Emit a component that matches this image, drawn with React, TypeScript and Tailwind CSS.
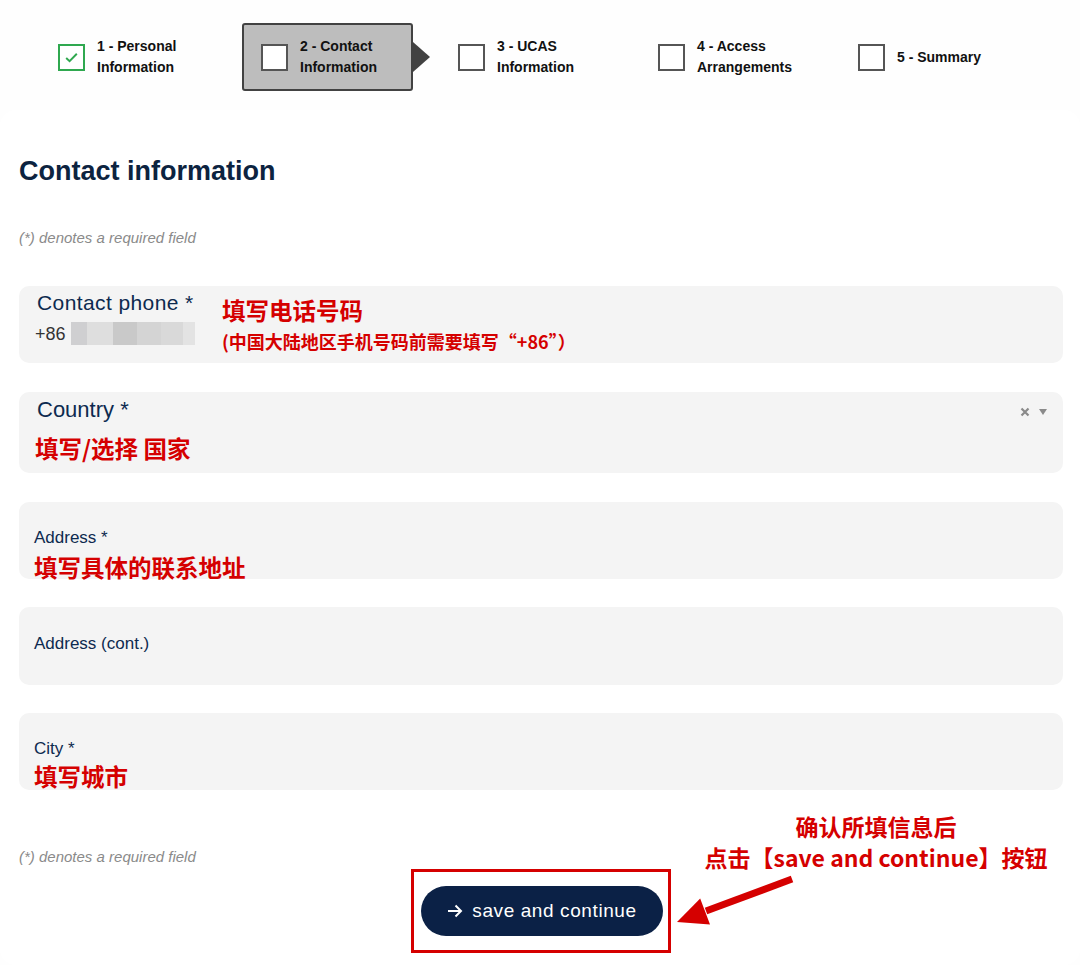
import * as React from "react";

const steps = [
  { n: "1 - Personal", l2: "Information", state: "done" },
  { n: "2 - Contact", l2: "Information", state: "active" },
  { n: "3 - UCAS", l2: "Information", state: "todo" },
  { n: "4 - Access", l2: "Arrangements", state: "todo" },
  { n: "5 - Summary", l2: "", state: "todo" },
];

const cjk = "font-['Noto_Sans_CJK_SC','Noto_Sans',sans-serif] font-bold text-[#d50000]";

function StepBox({ done }: { done?: boolean }) {
  return (
    <div
      className={
        "w-[27px] h-[27px] shrink-0 bg-white border-2 flex items-center justify-center " +
        (done ? "border-[#2fa84f]" : "border-[#555555]")
      }
    >
      {done && (
        <svg viewBox="0 0 16 16" className="w-[17px] h-[17px]">
          <path d="M3 8.5l3.2 3L13 4.5" fill="none" stroke="#2fa84f" strokeWidth="1.8" />
        </svg>
      )}
    </div>
  );
}

function StepLabel({ n, l2 }: { n: string; l2: string }) {
  return (
    <div className="ml-[12px] text-[14px] leading-[21px] font-bold text-[#111111]">
      <div>{n}</div>
      {l2 && <div>{l2}</div>}
    </div>
  );
}

function Stepper() {
  return (
    <div className="flex h-[68px] mt-[23px] pl-[40px]">
      {steps.map((s) =>
        s.state === "active" ? (
          <div key={s.n} className="w-[200px] flex items-center">
            <div className="relative ml-[2px] w-[171px] h-[68px] bg-[#bdbdbd] border-2 border-[#424242] rounded-[3px] flex items-center pl-[17px]">
              <StepBox />
              <StepLabel n={s.n} l2={s.l2} />
              <div className="absolute right-[-19px] top-[17px] w-0 h-0 border-y-[15px] border-y-transparent border-l-[17px] border-l-[#424242]" />
            </div>
          </div>
        ) : (
          <div key={s.n} className="w-[200px] flex items-center pl-[18px]">
            <StepBox done={s.state === "done"} />
            <StepLabel n={s.n} l2={s.l2} />
          </div>
        )
      )}
    </div>
  );
}

function Note() {
  return (
    <p className="text-[15px] leading-[20px] italic text-[#8a8a8a]">(*) denotes a required field</p>
  );
}

export default function App() {
  return (
    <div className="relative min-h-[965px] bg-[#fefefe] font-['Liberation_Sans','Noto_Sans_CJK_SC',sans-serif] overflow-hidden">
      <Stepper />

      <div className="mt-[19px] bg-white rounded-[16px] pl-[19px] pr-[17px] pt-[45px] pb-[12px]">
        <h1 className="text-[27px] leading-[32px] font-bold text-[#0c2340]">Contact information</h1>

        <div className="mt-[41px]">
          <Note />
        </div>

        {/* contact phone */}
        <div className="mt-[38px] h-[77px] rounded-[10px] bg-[#f4f4f4] flex pl-[18px]">
          <div className="w-[185px] pt-[5px]">
            <div className="text-[21px] tracking-[0.4px] leading-[24px] text-[#0d2a4f] whitespace-nowrap">Contact phone *</div>
            <div className="mt-[7px] flex items-center -ml-[2px]">
              <span className="text-[18px] leading-[22px] text-[#333333]">+86</span>
              <div className="ml-[5px] flex h-[23px]">
                <div className="w-[16px] bg-[#cfcfd1]" />
                <div className="w-[26px] bg-[#dedede]" />
                <div className="w-[24px] bg-[#c9c9c9]" />
                <div className="w-[24px] bg-[#d4d4d4]" />
                <div className="w-[22px] bg-[#d9d9d9]" />
                <div className="w-[12px] bg-[#e3e3e3]" />
              </div>
            </div>
          </div>
          <div className="pt-[10px]">
            <div className={cjk + " text-[23.5px] leading-[28px]"}>填写电话号码</div>
            <div className={cjk + " mt-[5px] text-[18px] leading-[24px]"}>(中国大陆地区手机号码前需要填写“+86”）</div>
          </div>
        </div>

        {/* country */}
        <div className="mt-[29px] h-[81px] rounded-[10px] bg-[#f4f4f4] pl-[18px] pr-[16px] pt-[6px]">
          <div className="flex items-center justify-between">
            <span className="text-[22px] leading-[24px] text-[#0d2a4f]">Country *</span>
            <div className="flex items-center gap-[9px] mt-[4px]">
              <svg viewBox="0 0 10 10" className="w-[10px] h-[10px]">
                <path d="M1.5 1.5l7 7M8.5 1.5l-7 7" stroke="#8a8a8a" strokeWidth="2.2" />
              </svg>
              <svg viewBox="0 0 8 6" className="w-[8px] h-[6px]">
                <path d="M0 0h8L4 6z" fill="#8a8a8a" />
              </svg>
            </div>
          </div>
          <div className={cjk + " mt-[12px] -ml-[2px] text-[23.5px] leading-[28px]"}>填写/选择 国家</div>
        </div>

        {/* address */}
        <div className="mt-[29px] h-[77px] rounded-[10px] bg-[#f4f4f4] pl-[15px] pt-[26px]">
          <div className="text-[17px] leading-[20px] text-[#0d2a4f]">Address *</div>
          <div className={cjk + " mt-[5px] text-[23.5px] leading-[28px]"}>填写具体的联系地址</div>
        </div>

        {/* address cont */}
        <div className="mt-[28px] h-[78px] rounded-[10px] bg-[#f4f4f4] pl-[15px] pt-[27px]">
          <div className="text-[17px] leading-[20px] text-[#0d2a4f]">Address (cont.)</div>
        </div>

        {/* city */}
        <div className="mt-[28px] h-[77px] rounded-[10px] bg-[#f4f4f4] pl-[15px] pt-[26px]">
          <div className="text-[17px] leading-[20px] text-[#0d2a4f]">City *</div>
          <div className={cjk + " mt-[3px] text-[23.5px] leading-[28px]"}>填写城市</div>
        </div>

        <div className="mt-[57px]">
          <Note />
        </div>

        <div className="mt-[2px] flex justify-center">
          <div className="w-[260px] h-[84px] border-[3px] border-[#d50000] flex items-center justify-center">
            <button className="w-[242px] h-[50px] rounded-full bg-[#0b2146] text-white text-[19px] tracking-[0.6px] flex items-center justify-center gap-[9px] ml-[2px]">
              <svg viewBox="0 0 16 14" className="w-[16px] h-[14px]">
                <path d="M1 7h13M8.5 1.5L14 7l-5.5 5.5" fill="none" stroke="white" strokeWidth="2" />
              </svg>
              <span>save and continue</span>
            </button>
          </div>
        </div>
      </div>

      {/* annotation */}
      <div className={cjk + " absolute left-[702px] top-[811px] w-[348px] text-center text-[23px] leading-[31px] whitespace-nowrap"}>
        <div>确认所填信息后</div>
        <div>点击【save and continue】按钮</div>
      </div>
      <svg className="absolute left-[660px] top-[860px] w-[150px] h-[80px]" viewBox="0 0 150 80">
        <path d="M132 19L46 51" stroke="#d50000" strokeWidth="7" />
        <polygon points="17,62 40.2,38.4 50,64.6" fill="#d50000" />
      </svg>
    </div>
  );
}
